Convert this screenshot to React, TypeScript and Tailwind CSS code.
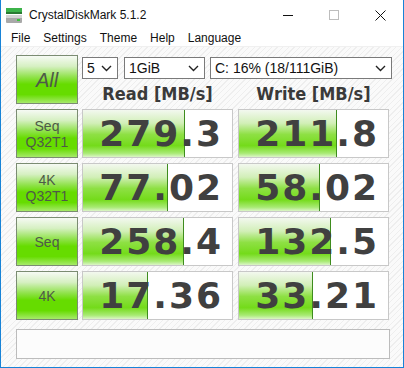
import type { JSX } from 'react';

const rows = [
  { label: ['Seq', 'Q32T1'], read: '279.3', write: '211.8' },
  { label: ['4K', 'Q32T1'], read: '77.02', write: '58.02' },
  { label: ['Seq'], read: '258.4', write: '132.5' },
  { label: ['4K'], read: '17.36', write: '33.21' },
];

const greenBtn =
  'bg-[linear-gradient(to_bottom,#f6faf4_0%,#d6f0c2_22%,#8fe24a_45%,#66dc00_60%,#66dc00_82%,#a6ea6a_100%)] border border-[#7b8c72]';

function Chevron(): JSX.Element {
  return (
    <svg width="11" height="7" viewBox="0 0 11 7" className="shrink-0">
      <polyline points="1,1 5.5,5.5 10,1" fill="none" stroke="#222" strokeWidth="1.4" />
    </svg>
  );
}

function Select({ w, text }: { w: string; text: string }): JSX.Element {
  return (
    <div className={`${w} h-[22px] border border-[#7a7a7a] bg-white flex items-center justify-between pl-[4px] pr-[5px] text-[14px] text-[#111]`}>
      <span>{text}</span>
      <Chevron />
    </div>
  );
}

function ValueCell({ value }: { value: string }): JSX.Element {
  // bar length is log scaled, like the real app
  const fill = Math.min(149, 30.67 * Math.log10(parseFloat(value)) + 27);
  return (
    <div className="relative w-[151px] h-[49px] border border-[#c8c8c8] bg-white flex items-center justify-end pr-[9px]">
      <div
        className="absolute left-0 top-0 bottom-0 border-r border-[#3e8c1e] bg-[linear-gradient(to_bottom,#f3f8ef_0%,#d2efb8_28%,#8ee044_52%,#74db1a_76%,#a8ea74_92%,#dcf5c8_100%)]"
        style={{ width: fill }}
      />
      <span
        className="relative text-[36px] leading-none font-bold tracking-[2px] text-[#404040]"
        style={{ fontFamily: '"DejaVu Sans", sans-serif' }}
      >
        {value}
      </span>
    </div>
  );
}

export default function App(): JSX.Element {
  return (
    <div
      className="w-[404px] h-[368px] flex flex-col bg-white border-x border-b border-[#1883d7] overflow-hidden text-[#111]"
      style={{ fontFamily: '"Liberation Sans", Arial, sans-serif' }}
    >
      {/* title bar */}
      <div className="h-[30px] flex items-center shrink-0">
        <svg width="17" height="16" viewBox="0 0 17 16" className="ml-[5px] mt-[1px]">
          <rect x="0" y="0" width="16" height="4" fill="#3cb34a" />
          <rect x="0" y="4" width="16" height="2" fill="#2a7a33" />
          <rect x="0" y="7" width="16" height="8" rx="1" fill="#a9a9a9" />
          <rect x="0" y="7" width="16" height="3" fill="#d4d4d4" />
          <rect x="11" y="11" width="3" height="2" fill="#3cc43c" />
        </svg>
        <span className="ml-[6px] text-[12px]">CrystalDiskMark 5.1.2</span>
        <div className="ml-auto flex h-full">
          <div className="w-[46px] flex items-center justify-center">
            <div className="w-[10px] h-px bg-[#111]" />
          </div>
          <div className="w-[46px] flex items-center justify-center">
            <div className="w-[10px] h-[10px] border border-[#bdbdbd]" />
          </div>
          <div className="w-[46px] flex items-center justify-center">
            <svg width="11" height="11" viewBox="0 0 11 11">
              <path d="M0.5 0.5 L10.5 10.5 M10.5 0.5 L0.5 10.5" stroke="#111" strokeWidth="1" />
            </svg>
          </div>
        </div>
      </div>

      {/* menu bar */}
      <div className="h-[17px] flex items-center gap-[13px] pl-[10px] text-[12px] border-b border-[#f0f0f0] shrink-0">
        <span>File</span>
        <span>Settings</span>
        <span>Theme</span>
        <span>Help</span>
        <span>Language</span>
      </div>

      {/* content */}
      <div className="flex-1 pl-[15px] pt-[8px] bg-[image:repeating-linear-gradient(135deg,#fafafa_0px,#fafafa_3px,#eeeeee_3px,#eeeeee_4px)]">
        <div className="flex gap-[4px] h-[49px]">
          <div className={`w-[62px] h-[49px] ${greenBtn} flex items-center justify-center`}>
            <span className="text-[20px] italic text-[#4e5a48]">All</span>
          </div>
          <div className="flex flex-col">
            <div className="flex mt-[2px]">
              <Select w="w-[36px]" text="5" />
              <Select w="w-[81px] ml-[6px]" text="1GiB" />
              <Select w="w-[182px] ml-[5px]" text="C: 16% (18/111GiB)" />
            </div>
            <div
              className="flex gap-[5px] mt-[5px] text-[18px] font-bold text-[#3a3a3a] leading-[20px]"
              style={{ fontFamily: '"DejaVu Sans Condensed", "DejaVu Sans", sans-serif', fontStretch: 'condensed' }}
            >
              <div className="w-[151px] text-center">Read [MB/s]</div>
              <div className="w-[151px] text-center">Write [MB/s]</div>
            </div>
          </div>
        </div>

        {rows.map((r) => (
          <div key={r.read} className="flex gap-[4px] mt-[5px]">
            <div className={`w-[62px] h-[49px] ${greenBtn} flex flex-col items-center justify-center text-[14px] leading-[16px] text-[#4e5a48]`}>
              {r.label.map((l) => (
                <span key={l}>{l}</span>
              ))}
            </div>
            <ValueCell value={r.read} />
            <div className="ml-[1px]">
              <ValueCell value={r.write} />
            </div>
          </div>
        ))}

        <div className="mt-[9px] w-[374px] h-[30px] border border-[#bcbcbc] bg-[#fcfcfc]" />
      </div>
    </div>
  );
}
